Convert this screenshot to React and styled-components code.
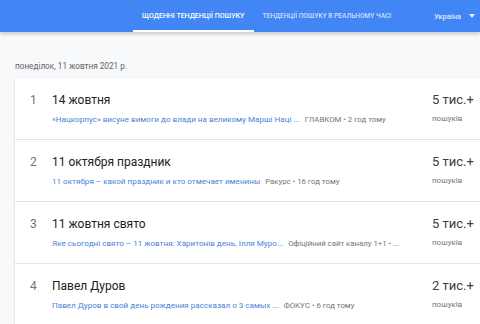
import styled, { createGlobalStyle } from "styled-components";

const GlobalStyle = createGlobalStyle`
  html, body {
    margin: 0;
    padding: 0;
    background: #f8f9fa;
    font-family: Roboto, "Liberation Sans", Arial, sans-serif;
    overflow: hidden;
  }
`;

const Page = styled.div`
  width: 480px;
  height: 324px;
  overflow: hidden;
  background: #f8f9fa;
`;

const Header = styled.header`
  height: 32px;
  background: #4285f4;
  display: flex;
  align-items: stretch;
  padding-left: 133px;
  box-shadow: 0 2px 4px rgba(0, 0, 0, 0.2);
  position: relative;
  z-index: 1;
`;

const Tab = styled.div`
  display: flex;
  align-items: center;
  padding: 2px 9px 0;
  font-size: ${({ $active }) => ($active ? "7px" : "6.6px")};
  font-weight: 500;
  text-transform: uppercase;
  color: ${({ $active }) => ($active ? "#fff" : "rgba(255,255,255,0.75)")};
  border-bottom: 2px solid ${({ $active }) => ($active ? "#fff" : "transparent")};
  white-space: nowrap;
`;

const Region = styled.div`
  margin-left: auto;
  display: flex;
  align-items: center;
  gap: 8px;
  padding-right: 5px;
  font-size: 7.5px;
  font-weight: 500;
  color: rgba(255, 255, 255, 0.85);
`;

const Caret = styled.span`
  width: 0;
  height: 0;
  border-left: 3px solid transparent;
  border-right: 3px solid transparent;
  border-top: 4px solid rgba(255, 255, 255, 0.85);
`;

const Body = styled.main`
  padding: 28px 0 0 15px;
`;

const DateLine = styled.div`
  font-size: 8.2px;
  line-height: 12px;
  color: #5f6368;
  margin-bottom: 6px;
`;

const Card = styled.section`
  width: 480px;
  background: #fff;
  border-radius: 2px;
  box-shadow: 0 1px 2px rgba(60, 64, 67, 0.2), 0 1px 3px rgba(60, 64, 67, 0.1);
`;

const Row = styled.div`
  display: grid;
  grid-template-columns: 37px 380px 1fr;
  height: 62px;
  box-sizing: border-box;
  padding-top: 14px;
  border-bottom: 1px solid #e4e4e4;
`;

const Rank = styled.div`
  padding-left: 15px;
  font-size: 12px;
  line-height: 16px;
  color: #757575;
`;

const Main = styled.div`
  min-width: 0;
  padding-right: 8px;
`;

const Title = styled.div`
  font-size: 12px;
  line-height: 16px;
  color: #212121;
`;

const Sub = styled.div`
  margin-top: 4px;
  font-size: 8.1px;
  line-height: 14px;
  white-space: nowrap;
  overflow: hidden;
`;

const Link = styled.span`
  color: #4a7fd9;
`;

const Source = styled.span`
  color: #757575;
  font-size: 7.8px;
  margin-left: 5px;
`;

const Count = styled.div`
  font-size: 13px;
  line-height: 16px;
  color: #3c4043;
  white-space: nowrap;
`;

const Searches = styled.div`
  margin-top: 4px;
  font-size: 8px;
  line-height: 14px;
  color: #757575;
`;

const trends = [
  {
    title: "14 жовтня",
    link: "«Нацкорпус» висуне вимоги до влади на великому Марші Наці ...",
    source: "ГЛАВКОМ • 2 год тому",
    count: "5 тис.+",
  },
  {
    title: "11 октября праздник",
    link: "11 октября – какой праздник и кто отмечает именины",
    source: "Ракурс • 16 год тому",
    count: "5 тис.+",
  },
  {
    title: "11 жовтня свято",
    link: "Яке сьогодні свято – 11 жовтня: Харитонів день, Ілля Муро...",
    source: "Офіційний сайт каналу 1+1 • ...",
    count: "5 тис.+",
  },
  {
    title: "Павел Дуров",
    link: "Павел Дуров в свой день рождения рассказал о 3 самых ...",
    source: "ФОКУС • 6 год тому",
    count: "2 тис.+",
  },
];

export default function App() {
  return (
    <Page>
      <GlobalStyle />
      <Header>
        <Tab $active>Щоденні тенденції пошуку</Tab>
        <Tab>Тенденції пошуку в реальному часі</Tab>
        <Region>
          Україна
          <Caret />
        </Region>
      </Header>
      <Body>
        <DateLine>понеділок, 11 жовтня 2021 р.</DateLine>
        <Card>
          {trends.map((t, i) => (
            <Row key={t.title}>
              <Rank>{i + 1}</Rank>
              <Main>
                <Title>{t.title}</Title>
                <Sub>
                  <Link>{t.link}</Link>
                  <Source>{t.source}</Source>
                </Sub>
              </Main>
              <div>
                <Count>{t.count}</Count>
                <Searches>пошуків</Searches>
              </div>
            </Row>
          ))}
        </Card>
      </Body>
    </Page>
  );
}
